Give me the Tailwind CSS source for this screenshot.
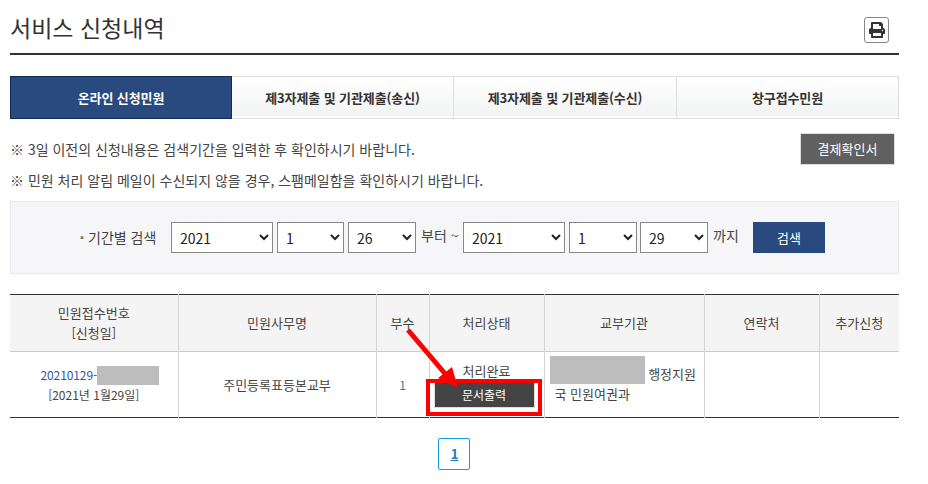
<!DOCTYPE html>
<html lang="ko">
<head>
  <meta charset="UTF-8">
  <meta name="viewport" content="width=device-width, initial-scale=1.0">
  <title>서비스 신청내역</title>
  <script src="https://cdn.jsdelivr.net/npm/@tailwindcss/browser@4"></script>
</head>
<body class="bg-white text-[#333] text-[13px] font-['Noto_Sans_CJK_KR',sans-serif] overflow-hidden">
  <div class="relative w-[928px] h-[484px] pl-[10px]">
    <div class="w-[889px]">
      <!-- title -->
      <div class="h-[55px] border-b-2 border-[#333] flex justify-between pt-[15px]">
        <h1 class="text-[23px] leading-[24px] font-normal text-[#333]">서비스 신청내역</h1>
        <button class="w-[25px] h-[26px] mt-[2px] mr-[10px] border border-[#888] rounded-[3px] flex items-center justify-center bg-white">
          <svg class="w-[16px] h-[16px]" viewBox="0 0 512 512" fill="#333"><path d="M448 192V77.25c0-8.49-3.37-16.62-9.37-22.63L393.37 9.37c-6-6-14.14-9.37-22.63-9.37H96C78.33 0 64 14.33 64 32v160c-35.35 0-64 28.65-64 64v112c0 8.84 7.16 16 16 16h48v96c0 17.67 14.33 32 32 32h320c17.67 0 32-14.33 32-32v-96h48c8.84 0 16-7.16 16-16V256c0-35.35-28.65-64-64-64zm-64 256H128v-96h256v96zm0-224H128V64h192v48c0 8.84 7.16 16 16 16h48v96zm48 72c-13.25 0-24-10.75-24-24 0-13.26 10.75-24 24-24s24 10.74 24 24c0 13.25-10.75 24-24 24z"/></svg>
        </button>
      </div>

      <!-- tabs -->
      <div class="mt-[21px] h-[43px] flex font-semibold text-[13px] tracking-[-0.1px]">
        <a class="w-[222px] bg-[#284a7e] border border-[#0f2c55] text-white flex items-center justify-center">온라인 신청민원</a>
        <a class="w-[222px] border-y border-r border-[#ddd] bg-[linear-gradient(#fff,#f2f3f3_94%,#fff_94%)] flex items-center justify-center">제3자제출 및 기관제출(송신)</a>
        <a class="w-[223px] border-y border-r border-[#ddd] bg-[linear-gradient(#fff,#f2f3f3_94%,#fff_94%)] flex items-center justify-center">제3자제출 및 기관제출(수신)</a>
        <a class="w-[222px] border-y border-r border-[#ddd] bg-[linear-gradient(#fff,#f2f3f3_94%,#fff_94%)] flex items-center justify-center">창구접수민원</a>
      </div>

      <!-- notes -->
      <div class="h-[82px] flex justify-between">
        <div class="pt-[15px] leading-[31px] text-[14px] text-[#444]">
          <p>※ 3일 이전의 신청내용은 검색기간을 입력한 후 확인하시기 바랍니다.</p>
          <p>※ 민원 처리 알림 메일이 수신되지 않을 경우, 스팸메일함을 확인하시기 바랍니다.</p>
        </div>
        <button class="mt-[14px] mr-[4px] w-[95px] h-[32px] bg-[#606060] border border-[#ddd] text-white">결제확인서</button>
      </div>

      <!-- search -->
      <div class="h-[73px] bg-[#f6f6f9] border border-[#e8e8ec] flex items-center pl-[66px] text-[14px] text-[#444]">
        <span class="w-[11px] text-[#777] text-[10px]">▪</span>
        <span class="w-[83px]">기간별 검색</span>
        <select class="w-[102px] h-[31px] border border-[#888] bg-white pl-[4px] text-[#222]"><option>2021</option></select>
        <select class="w-[67px] h-[31px] ml-[4px] border border-[#888] bg-white pl-[4px] text-[#222]"><option>1</option></select>
        <select class="w-[68px] h-[31px] ml-[4px] border border-[#888] bg-white pl-[4px] text-[#222]"><option>26</option></select>
        <span class="w-[47px] pl-[5px] -mt-[4px]">부터 ~</span>
        <select class="w-[102px] h-[31px] border border-[#888] bg-white pl-[4px] text-[#222]"><option>2021</option></select>
        <select class="w-[68px] h-[31px] ml-[4px] border border-[#888] bg-white pl-[4px] text-[#222]"><option>1</option></select>
        <select class="w-[68px] h-[31px] ml-[3px] border border-[#888] bg-white pl-[4px] text-[#222]"><option>29</option></select>
        <span class="w-[45px] pl-[5px] -mt-[4px]">까지</span>
        <button class="w-[72px] h-[31px] bg-[#284a7e] text-white text-[13px]">검색</button>
      </div>

      <!-- table -->
      <table class="mt-[20px] w-[889px] table-fixed border-collapse border-t border-b border-t-[#333] border-b-[#333] text-center text-[#444]">
        <thead>
          <tr class="h-[57px] bg-[#f4f4f4] border-b border-[#ccc]">
            <th class="w-[168px] font-normal border-r border-[#d4d4d4] leading-[20px]">민원접수번호<br>[신청일]</th>
            <th class="w-[198px] font-normal border-r border-[#d4d4d4]">민원사무명</th>
            <th class="w-[53px] font-normal border-r border-[#d4d4d4]">부수</th>
            <th class="w-[115px] font-normal border-r border-[#d4d4d4]">처리상태</th>
            <th class="w-[160px] font-normal border-r border-[#d4d4d4]">교부기관</th>
            <th class="w-[115px] font-normal border-r border-[#d4d4d4]">연락처</th>
            <th class="font-normal">추가신청</th>
          </tr>
        </thead>
        <tbody>
          <tr class="h-[66px]">
            <td class="border-r border-[#d4d4d4] leading-[19px] text-[12px]">
              <div class="pl-[12px]"><span class="text-[#2a5a9a] tracking-[-0.1px]">20210129-</span><span class="inline-block w-[62px] h-[19px] bg-[#bdbdbd] align-[-5px]"></span></div>
              <div>[2021년 1월29일]</div>
            </td>
            <td class="border-r border-[#d4d4d4]">주민등록표등본교부</td>
            <td class="border-r border-[#d4d4d4] text-[12px] text-[#667]">1</td>
            <td class="border-r border-[#d4d4d4] px-[4px]">
              <div class="leading-[20px]">처리완료</div>
              <button class="w-[101px] h-[27px] block bg-[#444] border border-[#ddd] text-white text-[12px]">문서출력</button>
            </td>
            <td class="border-r border-[#d4d4d4] pl-[5px] pb-[10px] leading-[20px] text-left">
              <span class="inline-block w-[95px] h-[28px] bg-[#bdbdbd] align-[-5px]"></span> 행정지원
              <div class="pl-[5px]">국 민원여권과</div>
            </td>
            <td class="border-r border-[#d4d4d4]"></td>
            <td></td>
          </tr>
        </tbody>
      </table>

      <!-- pagination -->
      <div class="mt-[20px] flex justify-center pr-[1px]">
        <a class="w-[32px] h-[32px] pl-[1px] border border-[#1a9be0] rounded-[2px] flex items-center justify-center font-semibold underline text-[#1a78c0]">1</a>
      </div>
    </div>

    <!-- red annotation over the table -->
    <div class="absolute left-[426px] top-[379px] w-[116px] h-[37px] border-[4px] border-[#f00]"></div>
    <svg class="absolute left-0 top-0 pointer-events-none" width="928" height="484" viewBox="0 0 928 484">
      <line x1="408" y1="330" x2="447" y2="376" stroke="#f00" stroke-width="5"/>
      <polygon points="458,388 438,378 452,367" fill="#f00"/>
    </svg>
  </div>
</body>
</html>
